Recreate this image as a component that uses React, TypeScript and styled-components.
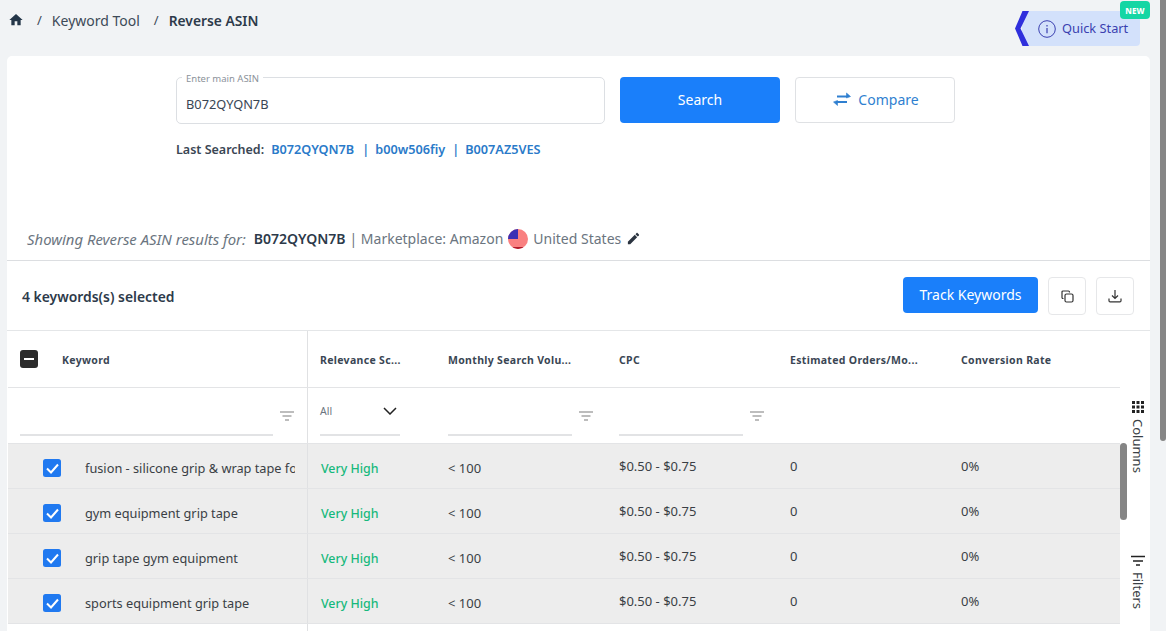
import React from "react";
import styled, { createGlobalStyle } from "styled-components";

const Global = createGlobalStyle`
  html, body { margin: 0; padding: 0; height: 100%; overflow: hidden; background: #f1f3f5; }
  * { box-sizing: border-box; }
  #root { height: 631px; font-family: "Noto Sans", "Open Sans", sans-serif; color: #2d3a4a; }
`;

const Page = styled.div`
  position: relative;
  width: 1166px;
  height: 631px;
  overflow: hidden;
  display: flex;
  flex-direction: column;
`;

const TopBar = styled.header`
  height: 56px;
  flex: none;
  display: flex;
  justify-content: space-between;
  padding: 0 26px 0 8px;
`;

const Crumbs = styled.nav`
  display: flex;
  align-items: center;
  height: 40px;
  font-size: 14px;
  color: #3d4a58;
`;

const Sep = styled.span`
  margin: 0 10px 0 ${(p: { $first?: boolean }) => (p.$first ? "13px" : "14px")};
  font-size: 13px;
`;

const CrumbCurrent = styled.span`
  font-weight: 600;
  font-size: 13.8px;
  color: #2d3a4a;
`;

const QuickStart = styled.div`
  position: relative;
  margin-top: 11px;
  height: 35px;
  display: flex;
`;

const Chevron = styled.svg`
  position: relative;
  z-index: 1;
  flex: none;
`;

const QuickBody = styled.div`
  width: 118px;
  margin-left: -7px;
  height: 35px;
  background: #d3e1fb;
  border-radius: 0 4px 4px 0;
  display: flex;
  align-items: center;
  gap: 6px;
  padding: 0 0 0 16px;
  font-size: 12.8px;
  color: #3a3fb0;
`;

const QuickLabel = styled.span`
  margin-top: -2px;
`;

const NewBadge = styled.span`
  position: absolute;
  z-index: 2;
  top: -10px;
  right: -10px;
  width: 30px;
  height: 18px;
  background: #14d6a4;
  color: #fff;
  border-radius: 4px;
  font-size: 8px;
  font-weight: 800;
  letter-spacing: 0.2px;
  display: flex;
  align-items: center;
  justify-content: center;
`;

const Card = styled.main`
  margin-left: 7px;
  width: 1143px;
  flex: 1;
  min-height: 0;
  background: #fff;
  border-radius: 5px 5px 0 0;
  display: flex;
  flex-direction: column;
`;

const SearchSection = styled.section`
  height: 150px;
  flex: none;
  padding: 21px 0 0 169px;
`;

const SearchRow = styled.div`
  display: flex;
  align-items: flex-start;
  gap: 15px;
`;

const InputBox = styled.div`
  position: relative;
  width: 429px;
  height: 47px;
  border: 1px solid #dcdfe3;
  border-radius: 5px;
  padding: 7px 9px 0;
  display: flex;
  align-items: center;
  font-size: 12.8px;
  color: #3a4654;
`;

const FloatLabel = styled.span`
  position: absolute;
  left: 5px;
  top: -5px;
  padding: 0 4px;
  background: #fff;
  font-size: 9.5px;
  line-height: 11px;
  color: #8b929a;
`;

const PrimaryButton = styled.button`
  width: ${(p: { $w: number; $h: number }) => p.$w}px;
  height: ${(p) => p.$h}px;
  border: 0;
  border-radius: 4px;
  background: #1a7ffa;
  color: #fff;
  font: 400 14px "Noto Sans", sans-serif;
  padding: 0 0 2px;
`;

const CompareButton = styled.button`
  width: 160px;
  height: 46px;
  border: 1px solid #dfe1e4;
  border-radius: 4px;
  background: #fff;
  color: #2f7fd0;
  font: 400 14px "Noto Sans", sans-serif;
  display: flex;
  align-items: center;
  justify-content: center;
  gap: 7px;
  padding: 0 0 2px 2px;
`;

const LastRow = styled.div`
  margin-top: 16px;
  height: 18px;
  display: flex;
  align-items: center;
  font-size: 12.5px;
  font-weight: 600;
  color: #3a4654;
`;

const LastLink = styled.a`
  color: #2a7ac9;
  font-size: 12.7px;
  margin-left: ${(p: { $gap: number }) => p.$gap}px;
`;

const Pipe = styled.span`
  margin-right: 6px;
`;

const ResultsLine = styled.div`
  height: 55px;
  flex: none;
  padding: 21px 0 0 20px;
  border-bottom: 1px solid #dcdee1;
  display: flex;
  align-items: flex-start;
  font-size: 14px;
  line-height: 24px;
  color: #6b7580;
`;

const ResultsItalic = styled.em`
  font-size: 14.9px;
  margin-right: 8px;
`;

const ResultsAsin = styled.strong`
  font-weight: 600;
  color: #2d3a4a;
  margin-right: 4px;
`;

const Flag = styled.svg`
  margin: 2px 5px 0 5px;
  flex: none;
`;

const PenIcon = styled.svg`
  margin: 4px 0 0 5px;
`;

const Toolbar = styled.div`
  height: 70px;
  flex: none;
  padding: 16px 16px 0 15px;
  border-bottom: 1px solid #e4e6e8;
  display: flex;
  align-items: flex-start;
`;

const SelectedText = styled.div`
  flex: 1;
  height: 40px;
  line-height: 40px;
  font-size: 13.9px;
  font-weight: 600;
  color: #2d3a4a;
`;

const IconButton = styled.button`
  width: 38px;
  height: 38px;
  margin-left: 10px;
  border: 1px solid #e6e7e9;
  border-radius: 4px;
  background: #fff;
  padding: 0;
  display: flex;
  align-items: center;
  justify-content: center;
  color: #333;
`;

const TableLayout = styled.div`
  flex: 1;
  min-height: 0;
  padding-left: 1px;
  display: flex;
`;

const Table = styled.div`
  position: relative;
  width: 1112px;
  flex: none;
`;

const Row = styled.div`
  display: grid;
  grid-template-columns: 300px 128px 171px 171px 171px 171px;
  height: ${(p: { $h: number; $sel?: boolean }) => p.$h}px;
  background: ${(p) => (p.$sel ? "#ededed" : "#fff")};
  border-bottom: 1px solid #e3e4e6;
`;

const EmptyRow = styled(Row)`
  border-bottom: 0;
`;

const Cell = styled.div`
  min-width: 0;
  padding-left: 12px;
  display: flex;
  align-items: center;
`;

const FirstCell = styled(Cell)`
  border-right: 1px solid #e0e1e3;
`;

const BodyCell = styled(Cell)`
  padding-top: 4px;
`;

const HeadText = styled.span`
  font-size: 10.5px;
  font-weight: 700;
  letter-spacing: 0.32px;
  color: #3a4654;
  white-space: nowrap;
  margin-top: 2px;
`;

const KeywordHead = styled(HeadText)`
  margin-left: 24px;
`;

const MinusBox = styled.span`
  width: 18px;
  height: 18px;
  flex: none;
  border-radius: 3px;
  background: #2b2b2b;
  display: flex;
  align-items: center;
  justify-content: center;
  &::after {
    content: "";
    width: 10px;
    height: 2px;
    background: #fff;
  }
`;

const FilterCell = styled.div`
  min-width: 0;
  padding: 0 0 0 12px;
  display: flex;
  align-items: flex-start;
`;

const FirstFilterCell = styled(FilterCell)`
  border-right: 1px solid #e0e1e3;
`;

const FilterLine = styled.div`
  width: ${(p: { $w: number }) => p.$w}px;
  height: 48px;
  border-bottom: 2px solid #e2e3e5;
  display: flex;
  align-items: center;
  justify-content: space-between;
  font-size: 10.5px;
  color: #6b7580;
  padding: 0 3px 0 0;
`;

const AllText = styled.span`
  margin-top: -1px;
`;

const FilterIcon = styled.svg`
  margin: 23px 0 0 7px;
  flex: none;
`;

const CheckCell = styled(FirstCell)`
  padding: 4px 0 0 35px;
  overflow: hidden;
`;

const CheckBox = styled.span`
  width: 18px;
  height: 18px;
  flex: none;
  border-radius: 2.5px;
  background: #2079f0;
  display: flex;
  align-items: center;
  justify-content: center;
`;

const KeywordText = styled.span`
  display: block;
  width: 210px;
  margin-left: 24px;
  overflow: hidden;
  white-space: nowrap;
  font-size: 12.75px;
  color: #3a3f45;
`;

const Relevance = styled.span`
  font-size: 12.4px;
  font-weight: 500;
  color: #17b97c;
  margin-left: 1px;
  margin-top: 1px;
`;

const Value = styled.span`
  font-size: 13px;
  color: #3a3f45;
  margin-top: ${(p: { $low?: boolean }) => (p.$low ? "-1px" : "-5px")};
`;

const SideRail = styled.aside`
  width: 30px;
  flex: none;
  padding: 70px 0 0 6px;
  display: flex;
  flex-direction: column;
  align-items: center;
`;

const RailItem = styled.div`
  display: flex;
  flex-direction: column;
  align-items: center;
  gap: 6px;
  margin-bottom: 81px;
  font-size: 13px;
  line-height: 14px;
  color: #3a3f45;
`;

const RailLabel = styled.span`
  writing-mode: vertical-rl;
`;

const PageScrollbar = styled.div`
  position: absolute;
  top: 0;
  right: 0;
  width: 6px;
  height: 441px;
  background: #868686;
  border-radius: 0 0 3px 3px;
`;

const TableScrollbar = styled.div`
  position: absolute;
  left: 1112px;
  top: 112px;
  width: 7px;
  height: 77px;
  background: #858585;
  border-radius: 4px;
`;

const Filter = () => (
  <FilterIcon width="14" height="10" viewBox="0 0 14 10" fill="none" stroke="#7d7d7d" strokeWidth="1.2">
    <path d="M0 1h14M2.5 5h9M5 9h4" />
  </FilterIcon>
);

const Check = () => (
  <svg width="13" height="11" viewBox="0 0 13 11" fill="none" stroke="#fff" strokeWidth="2">
    <path d="M1 5.5l4 4 7-8" />
  </svg>
);

const rows = [
  "fusion - silicone grip & wrap tape for",
  "gym equipment grip tape",
  "grip tape gym equipment",
  "sports equipment grip tape",
];

export default function App() {
  return (
    <Page>
      <Global />
      <TopBar>
        <Crumbs>
          <svg width="16" height="16" viewBox="0 0 24 24" fill="#243648">
            <path d="M10 20v-6h4v6h5v-8h3L12 3 2 12h3v8z" />
          </svg>
          <Sep $first>/</Sep>
          <span>Keyword Tool</span>
          <Sep>/</Sep>
          <CrumbCurrent>Reverse ASIN</CrumbCurrent>
        </Crumbs>
        <QuickStart>
          <Chevron width="14" height="35" viewBox="0 0 14 35" fill="#2f2fdc">
            <path d="M7.5 0H14L5.5 17.5 14 35H7.5L0 17.5z" />
          </Chevron>
          <QuickBody>
            <svg width="18" height="18" viewBox="0 0 18 18" fill="none" stroke="#3a3fb0" strokeWidth="1">
              <circle cx="9" cy="9" r="8.3" />
              <path d="M9 8v5.2M9 5v1.4" strokeWidth="1.2" />
            </svg>
            <QuickLabel>Quick Start</QuickLabel>
          </QuickBody>
          <NewBadge>NEW</NewBadge>
        </QuickStart>
      </TopBar>
      <Card>
        <SearchSection>
          <SearchRow>
            <InputBox>
              <FloatLabel>Enter main ASIN</FloatLabel>
              B072QYQN7B
            </InputBox>
            <PrimaryButton $w={160} $h={46}>Search</PrimaryButton>
            <CompareButton>
              <svg width="18" height="14" viewBox="0 0 18 14" fill="none" stroke="#2f7fd0" strokeWidth="2">
                <path d="M4 4.5h10" />
                <path d="M13.5 1l4 3.5-4 1.5z" fill="#2f7fd0" strokeWidth="0.6" />
                <path d="M14 10H4" />
                <path d="M4.5 13.5L.5 10l4-1.5z" fill="#2f7fd0" strokeWidth="0.6" />
              </svg>
              Compare
            </CompareButton>
          </SearchRow>
          <LastRow>
            Last Searched:
            <LastLink $gap={7}>B072QYQN7B</LastLink>
            <LastLink $gap={8}><Pipe>|</Pipe>b00w506fiy</LastLink>
            <LastLink $gap={7}><Pipe>|</Pipe>B007AZ5VES</LastLink>
          </LastRow>
        </SearchSection>
        <ResultsLine>
          <ResultsItalic>Showing Reverse ASIN results for:</ResultsItalic>
          <ResultsAsin>B072QYQN7B</ResultsAsin>
          <span>| Marketplace: Amazon</span>
          <Flag width="20" height="20" viewBox="0 0 20 20">
            <defs>
              <clipPath id="flagclip">
                <circle cx="10" cy="10" r="10" />
              </clipPath>
            </defs>
            <g clipPath="url(#flagclip)">
              <rect width="20" height="20" fill="#f98080" />
              <rect width="10" height="10" fill="#3a2fb4" />
              <rect y="18" width="20" height="2" fill="#b01a2a" />
            </g>
          </Flag>
          <span>United States</span>
          <PenIcon width="15" height="15" viewBox="0 0 24 24" fill="#2b3440">
            <path d="M3 17.25V21h3.75L17.81 9.94l-3.75-3.75L3 17.25zM20.71 7.04c.39-.39.39-1.02 0-1.41l-2.34-2.34c-.39-.39-1.02-.39-1.41 0l-1.83 1.83 3.75 3.75 1.83-1.83z" />
          </PenIcon>
        </ResultsLine>
        <Toolbar>
          <SelectedText>4 keywords(s) selected</SelectedText>
          <PrimaryButton $w={135} $h={36}>Track Keywords</PrimaryButton>
          <IconButton aria-label="Copy">
            <svg width="13" height="13" viewBox="0 0 13 13" fill="none" stroke="#333" strokeWidth="1.2">
              <rect x="4" y="4" width="8" height="8" rx="1.5" />
              <path d="M2.5 8.5H2A1 1 0 0 1 1 7.5V2a1 1 0 0 1 1-1h5.5a1 1 0 0 1 1 1v.5" />
            </svg>
          </IconButton>
          <IconButton aria-label="Download">
            <svg width="14" height="14" viewBox="0 0 14 14" fill="none" stroke="#333" strokeWidth="1.2">
              <path d="M7 1v8M4 6.5L7 9.5l3-3" />
              <path d="M1 9.5v2.2c0 .7.5 1.1 1.1 1.1h9.8c.6 0 1.1-.4 1.1-1.1V9.5" />
            </svg>
          </IconButton>
        </Toolbar>
        <TableLayout>
          <Table>
            <Row $h={57}>
              <FirstCell>
                <MinusBox />
                <KeywordHead>Keyword</KeywordHead>
              </FirstCell>
              <Cell><HeadText>Relevance Sc...</HeadText></Cell>
              <Cell><HeadText>Monthly Search Volu...</HeadText></Cell>
              <Cell><HeadText>CPC</HeadText></Cell>
              <Cell><HeadText>Estimated Orders/Mo...</HeadText></Cell>
              <Cell><HeadText>Conversion Rate</HeadText></Cell>
            </Row>
            <Row $h={56}>
              <FirstFilterCell>
                <FilterLine $w={253} />
                <Filter />
              </FirstFilterCell>
              <FilterCell>
                <FilterLine $w={80}>
                  <AllText>All</AllText>
                  <svg width="14" height="8" viewBox="0 0 14 8" fill="none" stroke="#222" strokeWidth="1.5">
                    <path d="M1 1l6 6 6-6" />
                  </svg>
                </FilterLine>
              </FilterCell>
              <FilterCell>
                <FilterLine $w={124} />
                <Filter />
              </FilterCell>
              <FilterCell>
                <FilterLine $w={124} />
                <Filter />
              </FilterCell>
              <FilterCell />
              <FilterCell />
            </Row>
            {rows.map((k) => (
              <Row $h={45} $sel key={k}>
                <CheckCell>
                  <CheckBox><Check /></CheckBox>
                  <KeywordText>{k}</KeywordText>
                </CheckCell>
                <BodyCell><Relevance>Very High</Relevance></BodyCell>
                <BodyCell><Value $low>&lt; 100</Value></BodyCell>
                <BodyCell><Value>$0.50 - $0.75</Value></BodyCell>
                <BodyCell><Value>0</Value></BodyCell>
                <BodyCell><Value>0%</Value></BodyCell>
              </Row>
            ))}
            <EmptyRow $h={45}>
              <FirstCell />
            </EmptyRow>
            <TableScrollbar />
          </Table>
          <SideRail>
            <RailItem>
              <svg width="12" height="12" viewBox="0 0 12 12" fill="#222">
                <path d="M0 0h3v3H0zM4.5 0h3v3h-3zM9 0h3v3H9zM0 4.5h3v3H0zM4.5 4.5h3v3h-3zM9 4.5h3v3H9zM0 9h3v3H0zM4.5 9h3v3h-3zM9 9h3v3H9z" />
              </svg>
              <RailLabel>Columns</RailLabel>
            </RailItem>
            <RailItem>
              <svg width="14" height="12" viewBox="0 0 14 12" fill="none" stroke="#222" strokeWidth="1.4">
                <path d="M0 2.5h14M2 7h10M5 11h4" />
              </svg>
              <RailLabel>Filters</RailLabel>
            </RailItem>
          </SideRail>
        </TableLayout>
      </Card>
      <PageScrollbar />
    </Page>
  );
}
